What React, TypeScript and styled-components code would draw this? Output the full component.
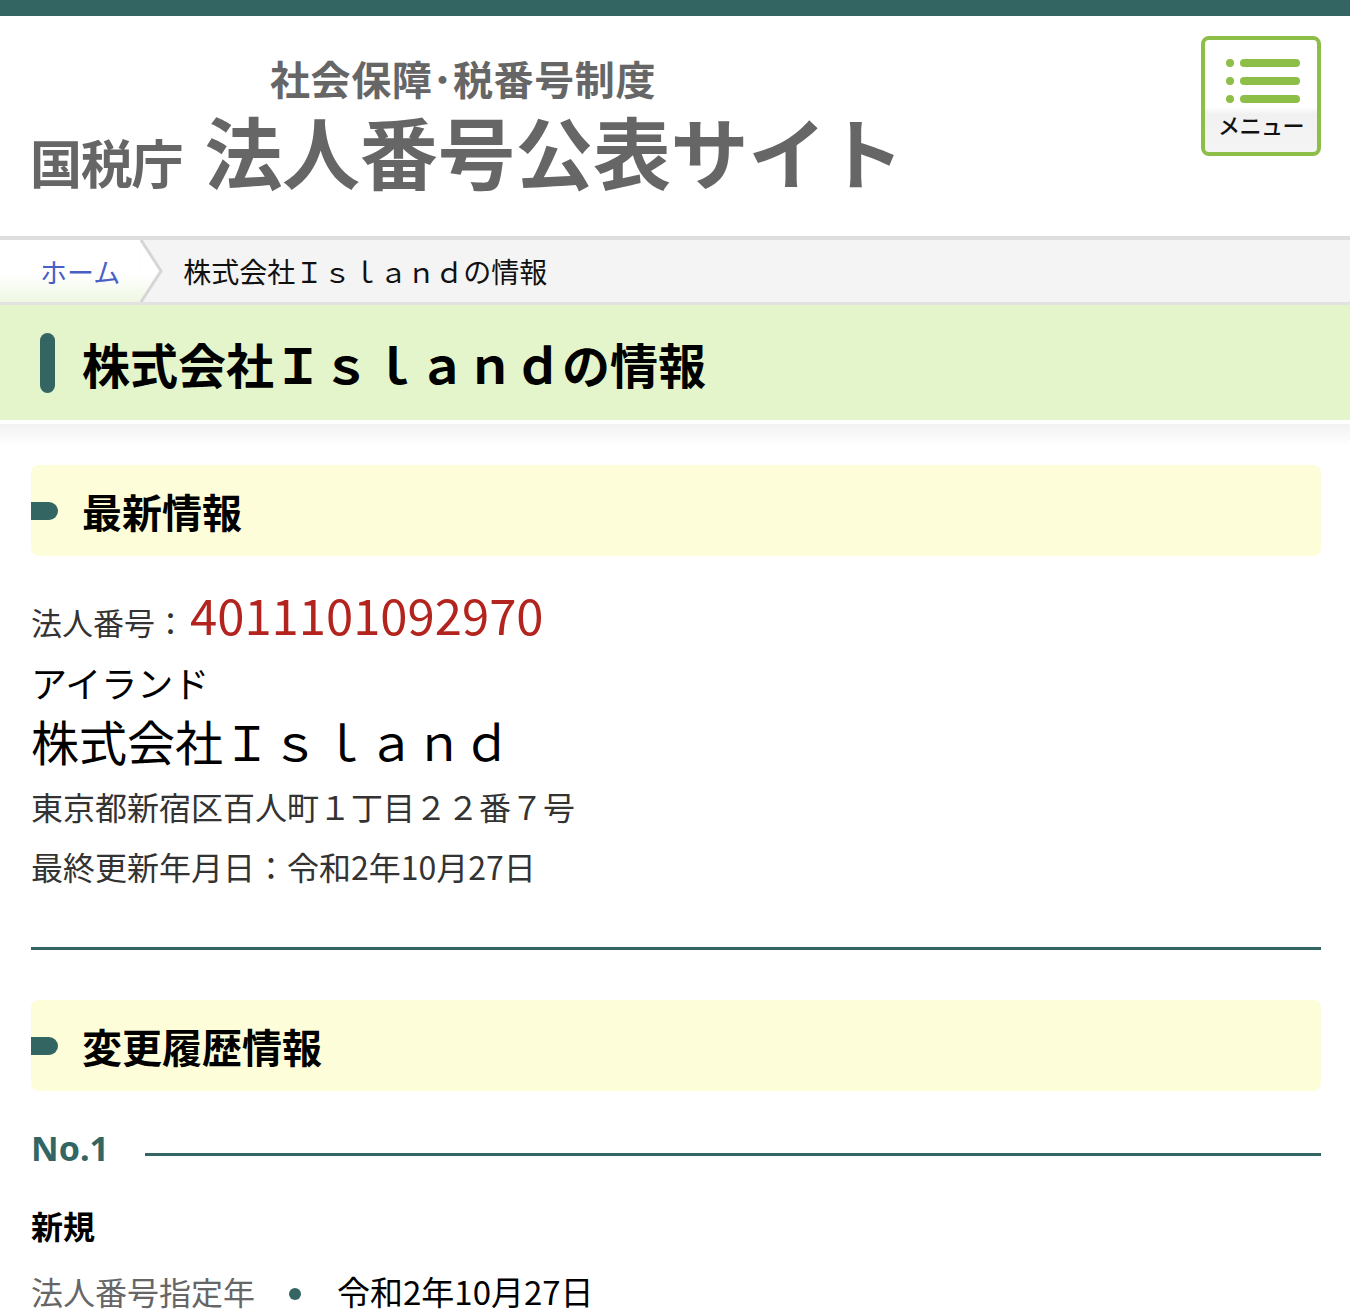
import styled, { createGlobalStyle } from "styled-components";

const GlobalStyle = createGlobalStyle`
  html, body {
    margin: 0;
    padding: 0;
    background: #fff;
  }
  body {
    font-family: "Noto Sans CJK JP", "Noto Sans", sans-serif;
    color: #000;
  }
`;

const TEAL = "#336562";

export default function App() {
  return (
    <>
      <GlobalStyle />
      <Page>
        <TopBar />
        <Header>
          <Logo>
            <LogoSub>社会保障･税番号制度</LogoSub>
            <LogoMain>
              <Agency>国税庁</Agency>
              <SiteName>法人番号公表サイト</SiteName>
            </LogoMain>
          </Logo>
          <MenuButton>
            <svg width="76" height="50" viewBox="0 0 76 50">
              {[0, 18, 36].map((y) => (
                <g key={y} fill="#8dbf48">
                  <circle cx="4" cy={y + 5} r="4" />
                  <rect x="14" y={y + 1} width="60" height="8" rx="4" />
                </g>
              ))}
            </svg>
            <MenuLabel>メニュー</MenuLabel>
          </MenuButton>
        </Header>

        <Breadcrumb>
          <HomeCrumb href="#">
            ホーム
            <Chevron width="24" height="62" viewBox="0 0 24 62">
              <polyline points="2,0 22,31 2,62" fill="none" stroke="#d6d6d6" strokeWidth="3" />
            </Chevron>
          </HomeCrumb>
          <CurrentCrumb>株式会社Ｉｓｌａｎｄの情報</CurrentCrumb>
        </Breadcrumb>

        <TitleBand>
          <TitleMark />
          <Title>株式会社Ｉｓｌａｎｄの情報</Title>
        </TitleBand>
        <Shade />

        <Content>
          <SectionHead>
            <Pill />
            <SectionTitle>最新情報</SectionTitle>
          </SectionHead>

          <Latest>
            <NumberRow>
              <NumberLabel>法人番号：</NumberLabel>
              <CorpNumber>4011101092970</CorpNumber>
            </NumberRow>
            <Kana>アイランド</Kana>
            <CorpName>株式会社Ｉｓｌａｎｄ</CorpName>
            <InfoLine>東京都新宿区百人町１丁目２２番７号</InfoLine>
            <InfoLine>最終更新年月日：令和2年10月27日</InfoLine>
          </Latest>

          <Divider />

          <SectionHead>
            <Pill />
            <SectionTitle>変更履歴情報</SectionTitle>
          </SectionHead>

          <HistoryHead>
            <HistoryNo>No.1</HistoryNo>
            <HistoryRule />
          </HistoryHead>
          <ChangeKind>新規</ChangeKind>
          <DetailRow>
            <DetailLabel>法人番号指定年</DetailLabel>
            <Dot />
            <DetailValue>令和2年10月27日</DetailValue>
          </DetailRow>
        </Content>
      </Page>
    </>
  );
}

const Page = styled.div`
  width: 1350px;
  min-height: 1314px;
  overflow: hidden;
`;

const TopBar = styled.div`
  height: 16px;
  background: ${TEAL};
`;

const Header = styled.header`
  height: 220px;
  display: flex;
  justify-content: space-between;
  align-items: flex-start;
  padding: 0 29px 0 30px;
`;

const Logo = styled.div`
  display: flex;
  flex-direction: column;
  color: #666;
  font-weight: 700;
  padding-top: 34px;
`;

const LogoSub = styled.div`
  font-size: 40px;
  line-height: 56px;
  letter-spacing: 0.6px;
  margin-left: 240px;
`;

const LogoMain = styled.div`
  display: flex;
  align-items: baseline;
  gap: 22px;
`;

const Agency = styled.span`
  font-size: 52px;
  line-height: 80px;
  letter-spacing: -1.2px;
`;

const SiteName = styled.span`
  font-size: 78px;
  line-height: 88px;
  letter-spacing: -0.3px;
`;

const MenuButton = styled.button`
  margin-top: 20px;
  width: 120px;
  height: 120px;
  box-sizing: border-box;
  border: 4px solid #8dbf48;
  border-radius: 8px;
  background: linear-gradient(#fff 0%, #fff 60%, #f1f1f1 66%, #f4f4f4 100%);
  display: flex;
  flex-direction: column;
  align-items: center;
  padding: 18px 0 0 6px;
  cursor: pointer;
`;

const MenuLabel = styled.span`
  font-family: "Noto Sans CJK JP", sans-serif;
  font-size: 22px;
  font-weight: 500;
  color: #111;
  line-height: 30px;
  margin-top: 1px;
  margin-left: -6px;
  letter-spacing: -0.5px;
`;

const Breadcrumb = styled.nav`
  height: 62px;
  border-top: 4px solid #dedede;
  border-bottom: 3px solid #e2e2e2;
  background: #f4f4f4;
  display: flex;
  align-items: center;
`;

const HomeCrumb = styled.a`
  position: relative;
  height: 62px;
  display: flex;
  align-items: center;
  padding: 0 20px 0 40px;
  margin-right: 43px;
  font-size: 27px;
  color: #4a5fc6;
  text-decoration: none;
  background: linear-gradient(#fff 0%, #fff 55%, #eef7e2 100%);
  &::after {
    content: "";
    position: absolute;
    top: 0;
    left: 100%;
    width: 22px;
    height: 62px;
    background: linear-gradient(#fff 0%, #fff 55%, #eef7e2 100%);
    clip-path: polygon(0 0, 100% 50%, 0 100%);
  }
`;

const Chevron = styled.svg`
  position: absolute;
  top: 0;
  left: calc(100% - 1px);
  z-index: 1;
`;

const CurrentCrumb = styled.span`
  font-size: 28px;
  color: #111;
`;

const TitleBand = styled.div`
  height: 115px;
  background: #e4f5cb;
  display: flex;
  align-items: center;
  padding-left: 40px;
`;

const TitleMark = styled.div`
  width: 15px;
  height: 60px;
  border-radius: 8px;
  background: ${TEAL};
  margin-right: 27px;
`;

const Title = styled.h1`
  margin: 0;
  font-size: 48px;
  font-weight: 700;
  line-height: 60px;
`;

const Shade = styled.div`
  height: 22px;
  margin-top: 4px;
  background: linear-gradient(#f2f2f2, #fff);
`;

const Content = styled.main`
  padding: 19px 29px 0 31px;
`;

const SectionHead = styled.div`
  height: 91px;
  background: #fdfdd9;
  border-radius: 8px;
  display: flex;
  align-items: center;
`;

const Pill = styled.div`
  width: 27px;
  height: 18px;
  background: ${TEAL};
  border-radius: 0 9px 9px 0;
  margin-right: 24px;
`;

const SectionTitle = styled.h2`
  margin: 0;
  font-size: 40px;
  font-weight: 700;
  line-height: 50px;
`;

const Latest = styled.div`
  padding-top: 26px;
  display: flex;
  flex-direction: column;
`;

const NumberRow = styled.div`
  display: flex;
  align-items: baseline;
`;

const NumberLabel = styled.span`
  font-size: 31px;
  color: #333;
`;

const CorpNumber = styled.span`
  font-size: 49px;
  color: #b3241e;
  line-height: 64px;
  margin-left: 4px;
`;

const Kana = styled.div`
  font-size: 36px;
  line-height: 52px;
  margin-top: 10px;
`;

const CorpName = styled.div`
  font-size: 48px;
  line-height: 64px;
  margin-bottom: 4px;
`;

const InfoLine = styled.div<{ $wide?: boolean }>`
  font-size: 32px;
  color: #333;
  line-height: 60px;
`;

const Divider = styled.hr`
  margin: 51px 0 50px;
  border: none;
  height: 3px;
  background: ${TEAL};
`;

const HistoryHead = styled.div`
  display: flex;
  align-items: center;
  margin-top: 32px;
  gap: 36px;
`;

const HistoryNo = styled.span`
  font-size: 34px;
  font-weight: 700;
  color: ${TEAL};
  line-height: 50px;
  font-family: "Noto Sans", sans-serif;
`;

const HistoryRule = styled.div`
  flex: 1;
  height: 3px;
  margin-top: 13px;
  background: ${TEAL};
`;

const ChangeKind = styled.div`
  font-size: 32px;
  font-weight: 700;
  line-height: 44px;
  margin-top: 30px;
`;

const DetailRow = styled.div`
  display: flex;
  align-items: center;
  margin-top: 22px;
`;

const DetailLabel = styled.span`
  font-size: 32px;
  color: #666;
  line-height: 44px;
`;

const Dot = styled.span`
  width: 12px;
  height: 12px;
  border-radius: 50%;
  background: ${TEAL};
  margin: 6px 36px 0 34px;
`;

const DetailValue = styled.span`
  font-size: 33px;
  line-height: 44px;
`;
